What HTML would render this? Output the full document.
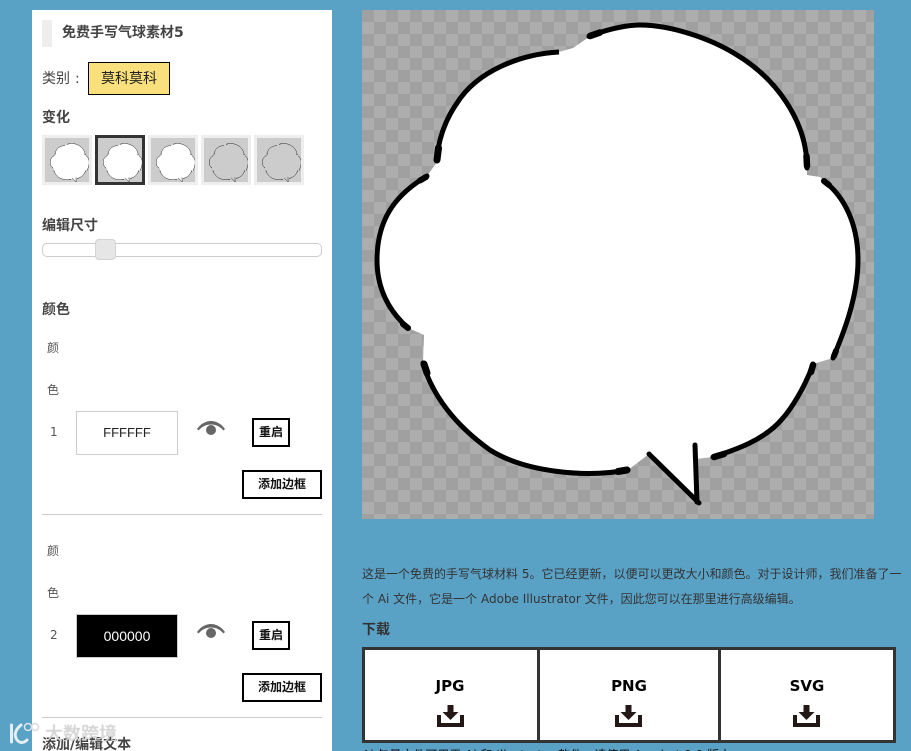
<!DOCTYPE html>
<html lang="zh"><head><meta charset="utf-8"><title>免费手写气球素材5</title>
<style>
html,body{margin:0;padding:0;width:911px;height:751px;overflow:hidden;background:#5aa1c6}
body{position:relative;font-family:"DejaVu Sans","Noto Sans CJK SC",sans-serif;color:#333;font-size:12px}
.a{position:absolute;box-sizing:border-box}
.t{position:absolute;line-height:20px;white-space:nowrap}
.b{font-weight:700;font-size:14px;color:#444}
.side{left:32px;top:10px;width:300px;height:741px;background:#fff}
.th{width:50px;height:50px;top:135px;border:3px solid #eee;background:#ccc;overflow:hidden}
.th svg{display:block;width:41.500px;height:41.500px;margin:3.500px 0 0 3.500px}
.in{left:76px;width:102px;height:44px;border:1px solid #ccc;text-align:center;line-height:42px;font-family:"Liberation Sans",sans-serif;font-size:13px}
.btn{border:2px solid #000;background:#fff;text-align:center;color:#111;font-weight:700;font-size:12px}
.hr{left:42px;width:280px;height:1px;background:#ccc}
.cell{top:650px;height:90px;background:#fff}
.fmt{position:absolute;line-height:20px;top:676px;width:60px;text-align:center;font-family:"DejaVu Sans",sans-serif;font-weight:bold;font-size:15px;color:#000}
.pen{fill:none;stroke:#000;stroke-width:5;stroke-linecap:round;stroke-linejoin:round}
</style></head><body>
<svg width="0" height="0" style="position:absolute"><defs>
<path id="f" d="M559,52L573,48L589,37C605,30 625,25 640,25C670,25 710,38 737,55C775,78 807,120 807,168L807,175L820,177L824,181C845,197 858,225 858,260C858,295 845,330 833,358L813,364C805,388 790,410 783,418C765,440 735,450 713,457L696,459L697,502L649,454L628,470C585,478 525,472 490,450C455,425 432,395 423,363L424,335L408,328C390,312 377,290 377,260C377,215 400,192 427,176L437,162C437,143 445,120 457,103C478,70 522,54 559,52Z" fill="#fff"/>
<g id="l" class="pen">
<path stroke-linecap="butt" d="M559,52C522,54 478,70 457,103C445,120 437,143 437,162"/>
<path stroke-width="7" d="M438.500,148L437,160"/>
<path d="M589,36.500C605,30 625,25 640,25C670,25 710,38 737,55C775,78 807,120 807,168"/>
<path stroke-width="6.500" d="M590,36L600,32.500M806.500,156L807,166"/>
<path d="M824,181C845,197 858,225 858,260C858,295 845,330 833,358"/>
<path stroke-width="6" d="M824,181L829,185M836,351L834,356"/>
<path d="M813,364C805,388 790,410 783,418C765,440 735,450 713,457"/>
<path stroke-width="6.500" d="M813,365L811,372M724,454L714,457"/>
<path d="M423,363C432,395 455,425 490,450C525,472 585,478 628,470"/>
<path stroke-width="7" d="M424,364L427,373M618,471.500L627,470"/>
<path d="M427,176C400,192 377,215 377,260C377,290 390,312 408,328"/>
<path stroke-width="6" d="M426,177L420,180.500M403,324L408,328"/>
<path stroke-width="5" d="M695,445L697,502M649,454L699,503"/>
</g></defs></svg>

<div class="a side"></div>
<div class="a" style="left:42px;top:20px;width:10px;height:27px;background:#eee"></div>
<div class="t" style="left:62px;top:23px;font-size:14px;font-weight:700;color:#444">免费手写气球素材5</div>
<div class="t" style="left:42px;top:69px;font-size:14px;color:#444">类别</div>
<div class="t" style="left:75px;top:69px;font-size:14px;color:#444">:</div>
<div class="a" style="left:88px;top:62px;width:82px;height:33px;background:#f9e07c;border:1px solid #000;text-align:center;line-height:33px;font-size:14px;color:#222">莫科莫科</div>
<div class="t b" style="left:42px;top:108px">变化</div>

<div class="a th" style="left:42px"><svg viewBox="362 10 512 509"><use href="#f"/><use href="#l"/></svg></div>
<div class="a th" style="left:95px;border-color:#333"><svg viewBox="362 10 512 509"><use href="#f"/><use href="#l"/></svg></div>
<div class="a th" style="left:148px"><svg viewBox="362 10 512 509"><use href="#f"/><use href="#l"/></svg></div>
<div class="a th" style="left:201px"><svg viewBox="362 10 512 509"><use href="#l"/></svg></div>
<div class="a th" style="left:254px"><svg viewBox="362 10 512 509"><use href="#l"/></svg></div>

<div class="t b" style="left:42px;top:216px">编辑尺寸</div>
<div class="a" style="left:42px;top:243px;width:280px;height:14px;border:1px solid #ccc;border-radius:5px;background:#fff"></div>
<div class="a" style="left:95px;top:239px;width:21px;height:21px;background:#e6e6e6;border:1px solid #d3d3d3;border-radius:4px"></div>

<div class="t b" style="left:42px;top:300px">颜色</div>

<div class="t" style="left:47px;top:338px;color:#555">颜</div>
<div class="t" style="left:47px;top:380px;color:#555">色</div>
<div class="t" style="left:50px;top:422px;color:#555">1</div>
<div class="a in" style="top:411px;background:#fff;color:#222">FFFFFF</div>
<svg class="a" style="left:197px;top:420px" width="28" height="18" viewBox="0 0 28 18"><path d="M0,9C4,3.500 9,1 14,1C19,1 24,3.500 28,9L26.500,10.500C23,6.500 19,4.500 14,4.500C9,4.500 5,6.500 1.500,10.500Z" fill="#666"/><circle cx="14" cy="10" r="5" fill="#666"/></svg>
<div class="a btn" style="left:252px;top:418px;width:38px;height:29px;line-height:25px">重启</div>
<div class="a btn" style="left:242px;top:470px;width:80px;height:29px;line-height:25px">添加边框</div>
<div class="a hr" style="top:514px"></div>

<div class="t" style="left:47px;top:541px;color:#555">颜</div>
<div class="t" style="left:47px;top:583px;color:#555">色</div>
<div class="t" style="left:50px;top:625px;color:#555">2</div>
<div class="a in" style="top:614px;background:#000;color:#fff;font-size:14px">000000</div>
<svg class="a" style="left:197px;top:623px" width="28" height="18" viewBox="0 0 28 18"><path d="M0,9C4,3.500 9,1 14,1C19,1 24,3.500 28,9L26.500,10.500C23,6.500 19,4.500 14,4.500C9,4.500 5,6.500 1.500,10.500Z" fill="#666"/><circle cx="14" cy="10" r="5" fill="#666"/></svg>
<div class="a btn" style="left:252px;top:621px;width:38px;height:29px;line-height:25px">重启</div>
<div class="a btn" style="left:242px;top:673px;width:80px;height:29px;line-height:25px">添加边框</div>
<div class="a hr" style="top:717px"></div>
<div class="t b" style="left:42px;top:735px">添加/编辑文本</div>

<div class="a" style="left:362px;top:10px;width:512px;height:509px;background:repeating-conic-gradient(#adadad 0 25%,#a0a0a0 0 50%) 0 0/24px 24px"></div>
<svg class="a" style="left:0;top:0" width="911" height="751" viewBox="0 0 911 751"><use href="#f"/><use href="#l"/></svg>

<div class="t" style="left:362px;top:564px;font-size:12px;color:#333">这是一个免费的手写气球材料 5。它已经更新，以便可以更改大小和颜色。对于设计师，我们准备了一</div>
<div class="t" style="left:362px;top:589px;font-size:12px;color:#333">个 Ai 文件，它是一个 Adobe Illustrator 文件，因此您可以在那里进行高级编辑。</div>
<div class="t b" style="left:362px;top:620px;color:#333">下载</div>

<div class="a" style="left:362px;top:647px;width:534px;height:96px;background:#333"></div>
<div class="a cell" style="left:365px;width:172px"></div>
<div class="a cell" style="left:540px;width:178px"></div>
<div class="a cell" style="left:721px;width:172px"></div>
<div class="fmt" style="left:420px">JPG</div>
<div class="fmt" style="left:599px">PNG</div>
<div class="fmt" style="left:777px">SVG</div>
<svg class="a" style="left:437px;top:705px" width="27" height="22" viewBox="0 0 27 22"><path fill="#231815" d="M0,10H4V18H23V10H27V22H0ZM10.500,0H16.500V7H21.500L13.500,15L5.500,7H10.500Z"/></svg>
<svg class="a" style="left:615px;top:705px" width="27" height="22" viewBox="0 0 27 22"><path fill="#231815" d="M0,10H4V18H23V10H27V22H0ZM10.500,0H16.500V7H21.500L13.500,15L5.500,7H10.500Z"/></svg>
<svg class="a" style="left:793px;top:705px" width="27" height="22" viewBox="0 0 27 22"><path fill="#231815" d="M0,10H4V18H23V10H27V22H0ZM10.500,0H16.500V7H21.500L13.500,15L5.500,7H10.500Z"/></svg>
<div class="t" style="left:362px;top:745px;font-size:12px;color:#111">Ai 矢量文件可用于 Ai 和 Illustrator 软件，请使用 Acrobat 9.0 版本</div>

<svg class="a" style="left:8px;top:722px" width="34" height="24" viewBox="0 0 34 24"><path d="M3.500,3V20M13,3C8,7 6,12 8,16C10,21 15,22 19,18" fill="none" stroke="#e4eef4" stroke-width="3" stroke-linecap="round"/><circle cx="20" cy="5" r="3.500" fill="none" stroke="#dde6ea" stroke-width="1.500"/><circle cx="27" cy="5" r="3.500" fill="none" stroke="#d8d8d8" stroke-width="1.500"/></svg>
<div class="t" style="left:45px;top:724px;font-size:18px;line-height:22px;color:#d6d6d6;text-shadow:0 0 1px rgba(120,120,120,.5)">大数跨境</div>
</body></html>
